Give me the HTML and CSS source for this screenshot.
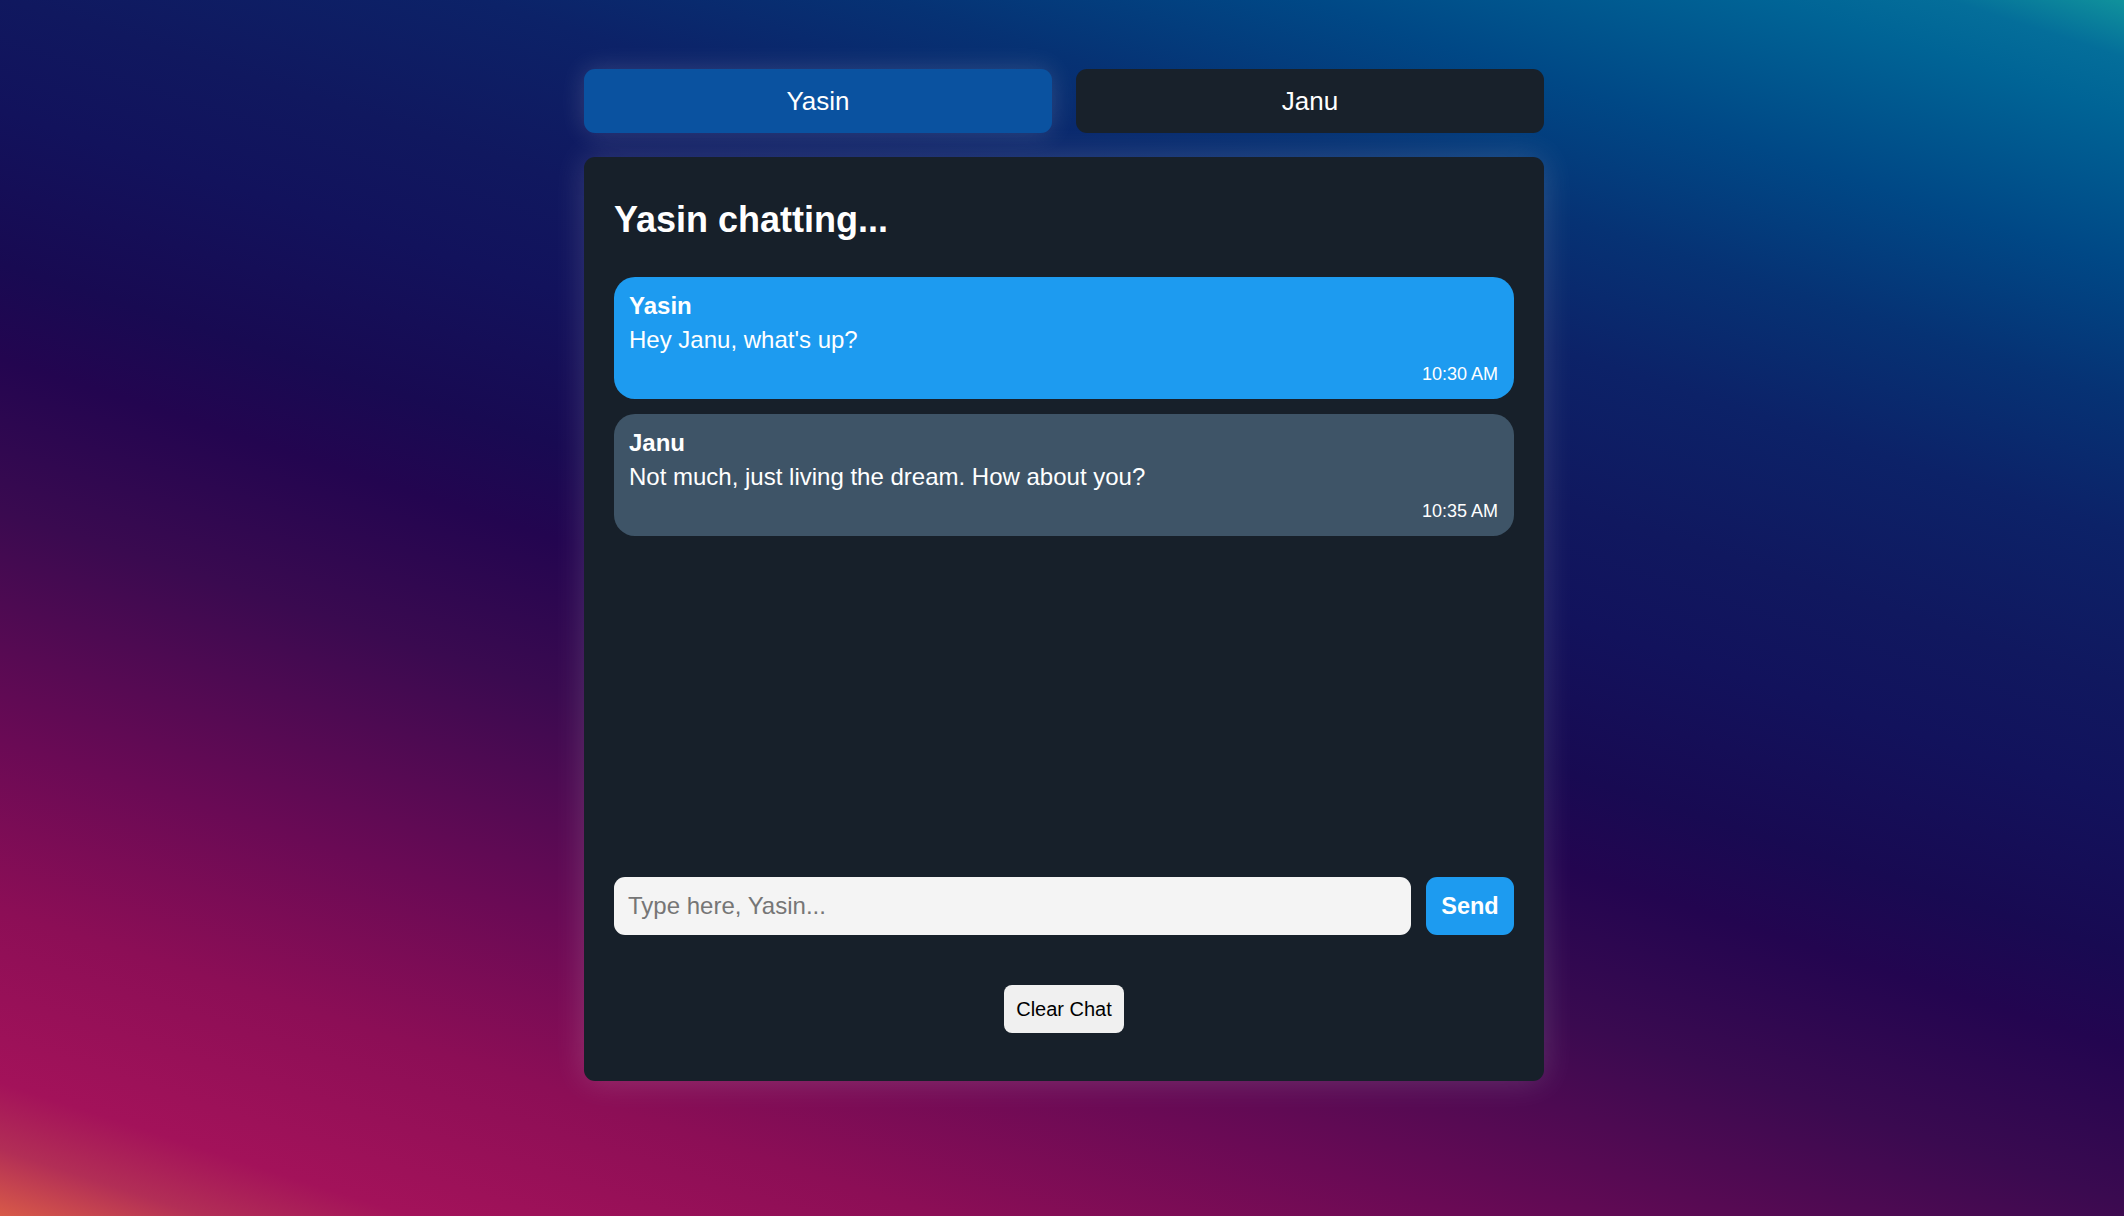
FILE: index.html
```html
<!DOCTYPE html>
<html lang="en">
<head>
<meta charset="utf-8">
<title>Chat</title>
<link rel="stylesheet" href="styles.css">
</head>
<body>
  <div class="app">
    <div class="tabs">
      <button class="tab tab-active">Yasin</button>
      <button class="tab">Janu</button>
    </div>
    <section class="panel">
      <h2 class="title">Yasin chatting...</h2>
      <div class="messages">
        <div class="bubble bubble-me">
          <div class="name">Yasin</div>
          <div class="text">Hey Janu, what's up?</div>
          <div class="time">10:30 AM</div>
        </div>
        <div class="bubble bubble-other">
          <div class="name">Janu</div>
          <div class="text">Not much, just living the dream. How about you?</div>
          <div class="time">10:35 AM</div>
        </div>
      </div>
      <div class="composer">
        <input class="input" type="text" placeholder="Type here, Yasin...">
        <button class="send">Send</button>
      </div>
      <div class="actions">
        <button class="clear">Clear Chat</button>
      </div>
    </section>
  </div>
</body>
</html>
```

FILE: styles.css
```css
* { box-sizing: border-box; }

html, body {
  margin: 0;
  height: 100%;
}

body {
  font-family: "Liberation Sans", Arial, sans-serif;
  color: #ffffff;
  background: linear-gradient(18deg,
    #d85a48 0%,
    #b22e56 3.5%,
    #a3125a 7%,
    #8c0e56 16%,
    #6a0a55 25%,
    #3a0a50 37%,
    #230550 45%,
    #180a52 50%,
    #12125c 58%,
    #10185f 64%,
    #0c2268 72%,
    #063274 79%,
    #004886 86%,
    #006496 94%,
    #046e9a 97%,
    #10929c 100%);
  min-height: 1216px;
}

.app {
  width: 960px;
  margin: 0 auto;
  padding-top: 69px;
  position: relative;
  left: 2px;
}

.tabs {
  display: grid;
  grid-template-columns: 1fr 1fr;
  gap: 24px;
}

.tab {
  height: 64px;
  border: none;
  border-radius: 11px;
  background: #18212b;
  color: #ffffff;
  font-family: "Liberation Sans", Arial, sans-serif;
  font-size: 26px;
  display: flex;
  align-items: center;
  justify-content: center;
  padding: 0;
}

.tab-active {
  background: #0a52a0;
  box-shadow: 0 0 26px rgba(255, 255, 255, 0.16);
}

.panel {
  margin-top: 24px;
  background: #17202a;
  border-radius: 11px;
  padding: 30px 30px 48px;
  box-shadow: 0 0 32px rgba(255, 255, 255, 0.16);
}

.title {
  margin: 12px 0 37px;
  font-size: 36px;
  line-height: 41px;
  font-weight: bold;
}

.messages {
  height: 585px;
  display: flex;
  flex-direction: column;
  gap: 15px;
  margin-bottom: 15px;
}

.bubble {
  border-radius: 21px;
  padding: 15px 16px 14px 15px;
  display: flex;
  flex-direction: column;
}

.bubble-me { background: #1d9bf0; }
.bubble-other { background: #3e5467; }

.name {
  font-size: 24px;
  line-height: 27px;
  font-weight: bold;
  margin-bottom: 7px;
}

.text {
  font-size: 24px;
  line-height: 27px;
}

.time {
  margin-top: 11px;
  font-size: 18px;
  line-height: 21px;
  text-align: right;
}

.composer {
  display: flex;
  gap: 15px;
  height: 58px;
}

.input {
  flex: 1;
  height: 58px;
  border: none;
  border-radius: 11px;
  background: #f4f4f4;
  padding: 0 14px;
  font-family: "Liberation Sans", Arial, sans-serif;
  font-size: 24px;
  color: #222;
  outline: none;
}

.input::placeholder { color: #767676; }

.send {
  width: 88px;
  height: 58px;
  border: none;
  border-radius: 11px;
  background: #1d9bf0;
  color: #ffffff;
  font-family: "Liberation Sans", Arial, sans-serif;
  font-size: 23.5px;
  font-weight: bold;
  padding: 0;
}

.actions {
  display: flex;
  justify-content: center;
  margin-top: 50px;
}

.clear {
  width: 120px;
  height: 48px;
  border: none;
  border-radius: 8px;
  background: #f0f0f0;
  color: #000000;
  font-family: "Liberation Sans", Arial, sans-serif;
  font-size: 20px;
  padding: 0;
}
```
